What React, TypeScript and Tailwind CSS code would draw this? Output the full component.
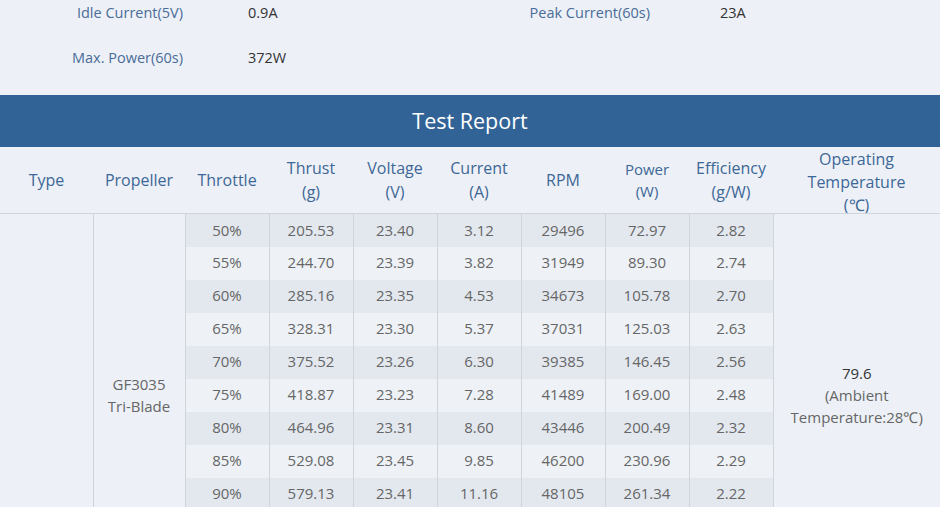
import React from "react";

const specs = [
  [
    ["Idle Current(5V)", "0.9A"],
    ["Peak Current(60s)", "23A"],
  ],
  [["Max. Power(60s)", "372W"]],
];

const rows = [
  ["50%", "205.53", "23.40", "3.12", "29496", "72.97", "2.82"],
  ["55%", "244.70", "23.39", "3.82", "31949", "89.30", "2.74"],
  ["60%", "285.16", "23.35", "4.53", "34673", "105.78", "2.70"],
  ["65%", "328.31", "23.30", "5.37", "37031", "125.03", "2.63"],
  ["70%", "375.52", "23.26", "6.30", "39385", "146.45", "2.56"],
  ["75%", "418.87", "23.23", "7.28", "41489", "169.00", "2.48"],
  ["80%", "464.96", "23.31", "8.60", "43446", "200.49", "2.32"],
  ["85%", "529.08", "23.45", "9.85", "46200", "230.96", "2.29"],
  ["90%", "579.13", "23.41", "11.16", "48105", "261.34", "2.22"],
  ["95%", "620.44", "23.38", "12.40", "49820", "289.91", "2.14"],
  ["100%", "662.70", "23.30", "13.62", "51290", "317.35", "2.09"],
];

const headers: [string, string?][] = [
  ["Type"],
  ["Propeller"],
  ["Throttle"],
  ["Thrust", "(g)"],
  ["Voltage", "(V)"],
  ["Current", "(A)"],
  ["RPM"],
  ["Power", "(W)"],
  ["Efficiency", "(g/W)"],
];

const widths = [93, 92, 84, 84, 84, 84, 84, 84, 84];

export default function App() {
  return (
    <div className="h-[507px] w-[940px] overflow-hidden bg-[#edf1f7] font-['Open_Sans',sans-serif]">
      {/* motor specs */}
      <div className="flex flex-col gap-[19px] pb-[24px]">
        {specs.map((line, i) => (
          <div key={i} className="grid h-[26px] grid-cols-2 items-center text-[14.5px]">
            {line.map(([label, value], j) => (
              <div key={label} className="flex items-center">
                <span
                  className={
                    "text-right text-[#4a6c98] " + (j === 0 ? "w-[183px]" : "w-[180px]")
                  }
                >
                  {label}
                </span>
                <span className={"text-[#333] " + (j === 0 ? "ml-[65px]" : "ml-[70px]")}>
                  {value}
                </span>
              </div>
            ))}
          </div>
        ))}
      </div>

      <div className="flex h-[52px] items-center justify-center bg-[#326397] text-[21.5px] text-white">
        Test Report
      </div>

      <table className="w-full table-fixed border-collapse">
        <colgroup>
          {widths.map((w, i) => (
            <col key={i} style={{ width: w }} />
          ))}
          <col />
        </colgroup>
        <thead>
          <tr className="border-b border-[#d0d5dc] text-[#3d6796]">
            {headers.map(([a, b]) => (
              <th key={a} className="h-[66px] p-0 font-normal">
                <div
                  className={
                    a === "Power"
                      ? "text-[15px] leading-[22px]"
                      : "text-[16px] leading-[24px]"
                  }
                >
                  <div>{a}</div>
                  {b && <div>{b}</div>}
                </div>
              </th>
            ))}
            <th className="p-0 font-normal">
              <div className="h-[66px] overflow-hidden pt-[1px] text-[16px] leading-[23px]">
                <div>Operating</div>
                <div>Temperature</div>
                <div>(℃)</div>
              </div>
            </th>
          </tr>
        </thead>
        <tbody className="text-[15px] text-[#666]">
          {rows.map((r, i) => (
            <tr key={r[0]} className="h-[33px]">
              {i === 0 && (
                <>
                  <td rowSpan={rows.length} className="border-r border-[#d0d5dc] p-0" />
                  <td
                    rowSpan={rows.length}
                    className="border-r border-[#d0d5dc] p-0 text-center leading-[22px]"
                  >
                    GF3035
                    <br />
                    Tri-Blade
                  </td>
                </>
              )}
              {r.map((v, j) => (
                <td
                  key={j}
                  className={
                    "border-r border-[#d0d5dc] p-0 pb-[1px] text-center " +
                    (i % 2 === 0 ? "bg-[#e3e8ef]" : "bg-[#eef2f7]")
                  }
                >
                  {v}
                </td>
              ))}
              {i === 0 && (
                <td rowSpan={rows.length} className="p-0 text-center leading-[22px]">
                  <div className="text-[#333]">79.6</div>
                  <div>(Ambient</div>
                  <div>Temperature:28℃)</div>
                </td>
              )}
            </tr>
          ))}
        </tbody>
      </table>
    </div>
  );
}
